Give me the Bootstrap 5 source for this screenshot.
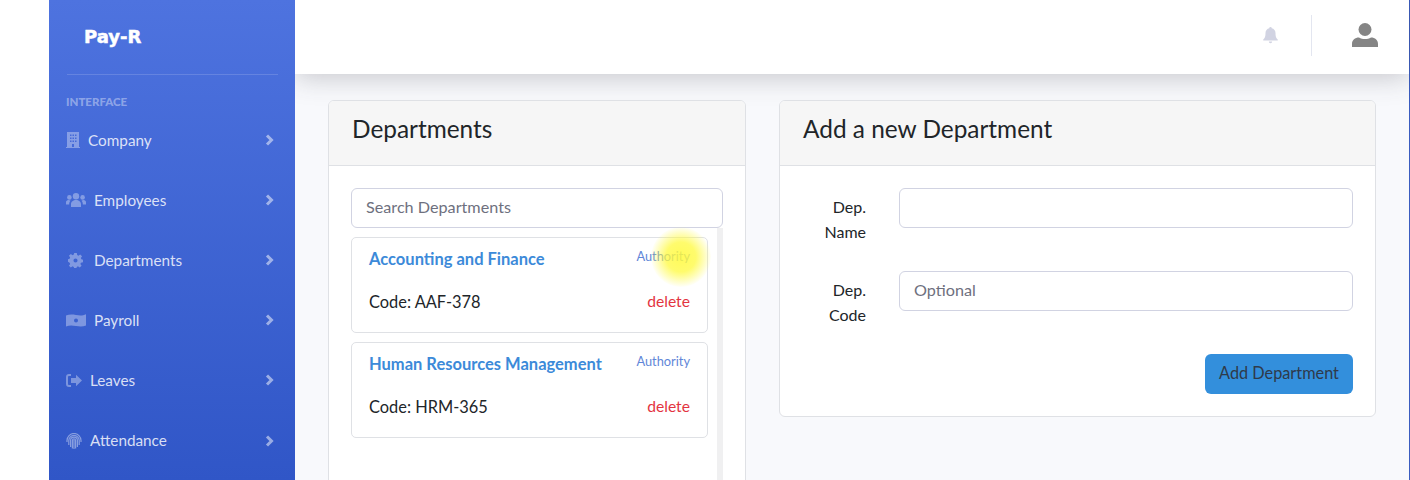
<!DOCTYPE html>
<html lang="en">
<head>
    <meta charset="UTF-8">
    <title>Pay-R Departments</title>
    <link href="https://cdn.jsdelivr.net/npm/bootstrap@5.3.0/dist/css/bootstrap.min.css" rel="stylesheet">
    <style>
        html, body { height: 480px; overflow: hidden; }
        body {
            font-family: "Lato", "Noto Sans", sans-serif;
            font-size: 16px;
            color: #212529;
            background: #fff;
        }
        .page-wrap { padding-left: 49px; height: 480px; background: #fff; border-right: 1px solid #3a5cc0; }
        .side-bar {
            width: 246px;
            flex: none;
            height: 480px;
            background: linear-gradient(180deg, #4e73df 0%, #3056c7 100%);
            padding: 0 17px 0 18px;
            overflow: hidden;
            position: relative;
            z-index: 2;
        }
        .brand-name {
            height: 75px;
            padding: 25px 0 0 17px;
            font-family: "DejaVu Sans", sans-serif;
            font-weight: 700;
            font-size: 18px;
            line-height: 24px;
            color: #fff;
            -webkit-text-stroke: .5px #fff;
            border-bottom: 1px solid rgba(255, 255, 255, .15);
            margin-bottom: 20px;
        }
        .side-head {
            font-size: 11.5px;
            font-weight: 900;
            line-height: 13px;
            color: rgba(255, 255, 255, .4);
            margin: 0 0 2px -1px;
        }
        .side-item {
            display: flex;
            align-items: center;
            height: 60.1px;
            color: rgba(255, 255, 255, .82);
            font-size: 15.3px;
            text-decoration: none;
            margin-left: -1px;
        }
        .side-ico { flex: none; fill: rgba(255, 255, 255, .35); margin-right: 8px; }
        .side-ico.gear-ico { margin: 0 11px 0 2px; }
        .side-ico.print-ico { fill: none; stroke: rgba(255, 255, 255, .42); stroke-width: 1.2; }
        .side-arrow { flex: none; margin-left: auto; margin-right: 4px; fill: none; stroke: rgba(255, 255, 255, .5); stroke-width: 3; }
        .main-col { min-width: 0; background: #f8f9fc; height: 480px; }
        .top-bar {
            height: 74px;
            background: #fff;
            box-shadow: 0 .15rem 1.75rem 0 rgba(58, 59, 69, .28);
            position: relative;
            padding: 0 31px 4px 0;
        }
        .top-divider { width: 1px; height: 41px; background: #e3e6f0; margin: 0 40px 0 33px; }
        .content-area { padding: 26px 33px 0 33px; gap: 33px; height: 406px; overflow: hidden; }
        .dep-list-card { width: 418px; flex: none; height: 500px; }
        .dep-form-card { flex: 1 1 0; height: 317px; }
        .dep-list-card, .dep-form-card { border-color: #dfe1e5; }
        .card-header.dep-head {
            height: 65px;
            padding: 0 23px 8px;
            display: flex;
            align-items: center;
            font-size: 24.4px;
            background: #f6f6f6;
            border-color: #dfe1e5;
        }
        .dep-body { padding: 22px; }
        .form-control { height: 40px; border-color: #d1d3e2; font-size: 16.2px; padding: 4px 12px 8px 14px; }
        .form-control::placeholder { color: #6e707e; }
        .list-box { width: 372px; height: 300px; position: relative; padding-top: 9px; }
        .list-track { position: absolute; right: 0; top: 0; bottom: 0; width: 6px; background: #f0f0f1; }
        .dep-item {
            width: 357px;
            height: 96px;
            border: 1px solid #dfe1e5;
            border-radius: 5px;
            padding: 9px 17px 0;
            margin-bottom: 9px;
            background: #fff;
            gap: 19px;
        }
        .dep-top, .dep-bottom { line-height: 24px; }
        .dep-title { color: #3c8ad9; font-weight: 700; font-size: 16.5px; }
        .dep-auth { color: #5f86d8; font-size: 12.8px; line-height: 18px; }
        .dep-del { color: #e3343f; font-size: 15.7px; line-height: 22px; }
        .dep-code { font-size: 16.4px; }
        .glow-spot {
            position: absolute;
            left: 300px;
            top: -1px;
            width: 60px;
            height: 60px;
            border-radius: 50%;
            background: radial-gradient(circle, rgba(255, 250, 60, .85) 0%, rgba(255, 250, 60, .75) 35%, rgba(255, 250, 60, 0) 72%);
            pointer-events: none;
        }
        .form-row-gap { gap: 33px; margin-bottom: 27.5px; }
        .form-lab { width: 64px; flex: none; padding-top: 5.5px; text-align: right; line-height: 25px; font-size: 16px; }
        .add-btn { background: #338fdc; border: 0; color: #2f3a4a; height: 40px; width: 148px; padding: 0 0 2px; font-size: 16.3px; }
        .add-btn:hover { background: #338fdc; color: #2f3a4a; }
    </style>
</head>
<body>
    <div class="page-wrap d-flex">
        <nav class="side-bar">
            <div class="brand-name">Pay-R</div>
            <div class="side-head">INTERFACE</div>
            <a class="side-item" href="#">
                <svg class="side-ico" width="14" height="16" viewBox="0 0 14 16"><path fill-rule="evenodd" d="M1 0h12v15h1v1H0v-1h1zM4 2.500v1.500h1.500V2.500zm2.500 0v1.500h1.500V2.500zm2.500 0v1.500h1.500V2.500zM4 5.500V7h1.500V5.500zm2.500 0V7h1.500V5.500zm2.500 0V7h1.500V5.500zM4 8.500V10h1.500V8.500zm2.500 0V10h1.500V8.500zm2.500 0V10h1.500V8.500zM6 12v3h2v-3z"/></svg>
                Company
                <svg class="side-arrow" width="9" height="12" viewBox="0 0 9 12"><path d="M2 1.500 6.500 6 2 10.500"/></svg>
            </a>
            <a class="side-item" href="#">
                <svg class="side-ico" width="20" height="14" viewBox="0 0 20 14"><circle cx="10" cy="3.200" r="3.200"/><circle cx="3.400" cy="4.400" r="2.300"/><circle cx="16.600" cy="4.400" r="2.300"/><path d="M5 14v-2.800C5 8.800 7.200 7 10 7s5 1.800 5 4.200V14zM0 11.500V9.200C0 8 1 7 2.400 7c.8 0 1.600.3 2.100.8-.9.800-1.300 1.900-1.300 3.700zM20 11.500V9.200C20 8 19 7 17.600 7c-.8 0-1.600.3-2.100.8.9.800 1.300 1.900 1.300 3.700z"/></svg>
                Employees
                <svg class="side-arrow" width="9" height="12" viewBox="0 0 9 12"><path d="M2 1.500 6.500 6 2 10.500"/></svg>
            </a>
            <a class="side-item" href="#">
                <svg class="side-ico gear-ico" width="15" height="15" viewBox="0 0 16 16"><path fill-rule="evenodd" d="M6.600 0h2.800l.4 2.200 1.300.6 1.900-1.300 2 2-1.300 1.900.6 1.300 1.700.4v2.800l-2.200.4-.6 1.300 1.300 1.900-2 2-1.900-1.300-1.300.6-.4 2.200H6.600l-.4-2.200-1.300-.6-1.900 1.300-2-2 1.300-1.900-.6-1.300L0 9.400V6.600l1.700-.4.6-1.300L1 3l2-2 1.900 1.300 1.300-.6zM8 5.800a2.200 2.200 0 1 0 0 4.400 2.200 2.200 0 0 0 0-4.400z"/></svg>
                Departments
                <svg class="side-arrow" width="9" height="12" viewBox="0 0 9 12"><path d="M2 1.500 6.500 6 2 10.500"/></svg>
            </a>
            <a class="side-item" href="#">
                <svg class="side-ico" width="20" height="13" viewBox="0 0 20 13"><path fill-rule="evenodd" d="M0 1.500C3 .3 6 .3 10 1c4 .7 7 .7 10-.8v11.300c-3 1.300-6 1.300-10 .6s-7-.7-10 .4zM10 4.500a2 2 0 1 0 0 4 2 2 0 0 0 0-4z"/></svg>
                Payroll
                <svg class="side-arrow" width="9" height="12" viewBox="0 0 9 12"><path d="M2 1.500 6.500 6 2 10.500"/></svg>
            </a>
            <a class="side-item" href="#">
                <svg class="side-ico" width="16" height="13" viewBox="0 0 16 13"><path d="M5 0v2H3a1 1 0 0 0-1 1v7a1 1 0 0 0 1 1h2v2H3a3 3 0 0 1-3-3V3a3 3 0 0 1 3-3zM10 .8l6 5.700-6 5.700V9H5V4h5z"/></svg>
                Leaves
                <svg class="side-arrow" width="9" height="12" viewBox="0 0 9 12"><path d="M2 1.500 6.500 6 2 10.500"/></svg>
            </a>
            <a class="side-item" href="#">
                <svg class="side-ico print-ico" width="16" height="16" viewBox="0 0 16 16"><path d="M1 9V7.500a7 7 0 0 1 14 0V9M2.800 12V7.500a5.200 5.200 0 0 1 10.400 0V12M4.600 14V7.500a3.400 3.400 0 0 1 6.800 0V14M6.400 15.500v-8a1.600 1.600 0 0 1 3.200 0v8M8 7v9"/></svg>
                Attendance
                <svg class="side-arrow" width="9" height="12" viewBox="0 0 9 12"><path d="M2 1.500 6.500 6 2 10.500"/></svg>
            </a>
        </nav>
        <div class="main-col flex-grow-1">
            <div class="top-bar d-flex align-items-center justify-content-end">
                <svg width="15" height="17" viewBox="0 0 15 17" fill="#d1d3e2"><path d="M7.500 0a1.200 1.200 0 0 1 1.200 1.300C11 1.800 12.500 3.700 12.500 6c0 4 .9 5.200 2.200 6.500.3.400.1 1-.5 1H.800c-.6 0-.8-.6-.5-1C1.600 11.200 2.500 10 2.500 6c0-2.300 1.500-4.200 3.800-4.700A1.200 1.200 0 0 1 7.500 0zM5.800 14.500h3.400a1.700 1.700 0 0 1-3.400 0z"/></svg>
                <div class="top-divider"></div>
                <svg width="26" height="24" viewBox="0 0 26 24" fill="#858585"><circle cx="13" cy="6.500" r="6.500"/><path d="M0 24v-3c0-4 3-6.500 7-6.500 1.800 1 3.800 1.500 6 1.500s4.200-.5 6-1.500c4 0 7 2.500 7 6.500v3z"/></svg>
            </div>
            <div class="content-area d-flex align-items-start">
                <div class="card dep-list-card">
                    <div class="card-header dep-head">Departments</div>
                    <div class="card-body dep-body">
                        <input class="form-control" type="text" placeholder="Search Departments">
                        <div class="list-box">
                            <div class="list-track"></div>
                            <div class="dep-item position-relative d-flex flex-column">
                                <div class="dep-top d-flex justify-content-between align-items-start"><span class="dep-title">Accounting and Finance</span><span class="dep-auth">Authority</span></div>
                                <div class="dep-bottom d-flex justify-content-between align-items-start"><span class="dep-code">Code: AAF-378</span><span class="dep-del">delete</span></div>
                            </div>
                            <div class="dep-item position-relative d-flex flex-column">
                                <div class="dep-top d-flex justify-content-between align-items-start"><span class="dep-title">Human Resources Management</span><span class="dep-auth">Authority</span></div>
                                <div class="dep-bottom d-flex justify-content-between align-items-start"><span class="dep-code">Code: HRM-365</span><span class="dep-del">delete</span></div>
                            </div>
                            <div class="glow-spot"></div>
                        </div>
                    </div>
                </div>
                <div class="card dep-form-card">
                    <div class="card-header dep-head">Add a new Department</div>
                    <div class="card-body dep-body">
                        <div class="d-flex form-row-gap">
                            <label class="form-lab" for="depName">Dep. Name</label>
                            <input class="form-control" id="depName" type="text">
                        </div>
                        <div class="d-flex form-row-gap">
                            <label class="form-lab" for="depCode">Dep. Code</label>
                            <input class="form-control" id="depCode" type="text" placeholder="Optional">
                        </div>
                        <div class="d-flex justify-content-end">
                            <button class="btn add-btn" type="button">Add Department</button>
                        </div>
                    </div>
                </div>
            </div>
        </div>
    </div>
    <script src="https://cdn.jsdelivr.net/npm/bootstrap@5.3.0/dist/js/bootstrap.bundle.min.js"></script>
</body>
</html>
